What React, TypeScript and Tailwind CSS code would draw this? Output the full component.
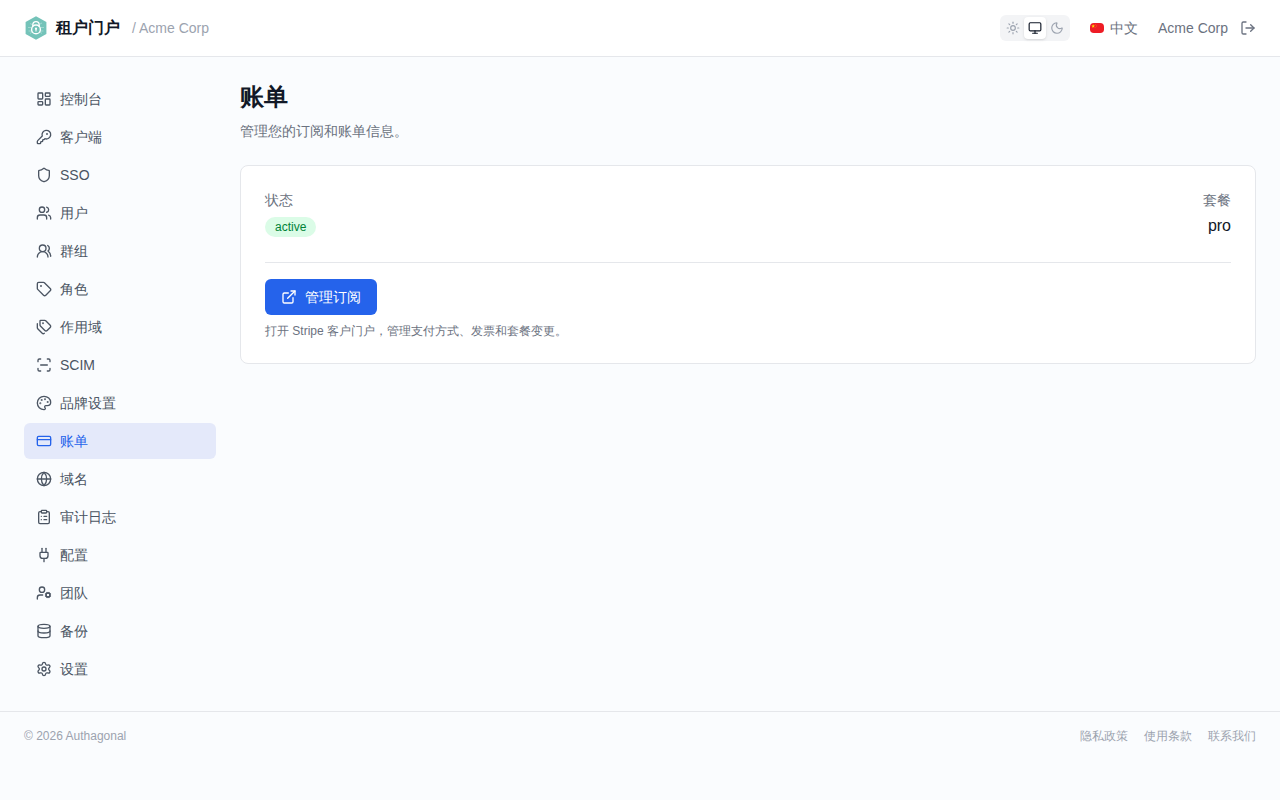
import React from 'react';
import {
  ClipboardList,
  CreditCard,
  Database,
  ExternalLink,
  Globe,
  KeyRound,
  LayoutDashboard,
  LogOut,
  LucideIcon,
  Monitor,
  Moon,
  Palette,
  Plug,
  ScanLine,
  Settings,
  Shield,
  Sun,
  Tag,
  Tags,
  UserCog,
  Users,
  UsersRound,
} from 'lucide-react';

interface NavItem {
  label: string;
  icon: LucideIcon;
  active?: boolean;
}

const navItems: NavItem[] = [
  { label: '控制台', icon: LayoutDashboard },
  { label: '客户端', icon: KeyRound },
  { label: 'SSO', icon: Shield },
  { label: '用户', icon: Users },
  { label: '群组', icon: UsersRound },
  { label: '角色', icon: Tag },
  { label: '作用域', icon: Tags },
  { label: 'SCIM', icon: ScanLine },
  { label: '品牌设置', icon: Palette },
  { label: '账单', icon: CreditCard, active: true },
  { label: '域名', icon: Globe },
  { label: '审计日志', icon: ClipboardList },
  { label: '配置', icon: Plug },
  { label: '团队', icon: UserCog },
  { label: '备份', icon: Database },
  { label: '设置', icon: Settings },
];

const footerLinks = ['隐私政策', '使用条款', '联系我们'];

const Logo: React.FC = () => (
  <svg viewBox="0 0 24 24" className="h-6 w-6" fill="none">
    <path d="M12 0.2 22.4 6v12L12 23.8 1.6 18V6z" fill="#74c3b9" />
    <g stroke="#b5e0da" strokeWidth="0.7">
      <path d="M4 11.5h3M4.5 15h2.5M6 17.5l2-1.5M17 11.5h3M17 15h2.5M16 16l2 1.5M6 7.5l2 1M18 7l-2 1" />
    </g>
    <path d="M8.8 11V8.9a3.2 3.2 0 0 1 6.4 0V11" stroke="#fff" strokeWidth="1.3" />
    <circle cx="12" cy="13.4" r="4.4" stroke="#fff" strokeWidth="1.4" />
    <circle cx="12" cy="12.7" r="1.1" fill="#fff" />
    <path d="M12 12.8v2.6" stroke="#fff" strokeWidth="1.1" />
  </svg>
);

const ChinaFlag: React.FC = () => (
  <svg viewBox="0 0 14 10" className="h-2.5 w-3.5">
    <rect width="14" height="10" rx="3.8" fill="#ee1c25" />
    <path d="m3.2 1.2.5 1.2 1.3.1-1 .85.3 1.3-1.1-.7-1.1.7.3-1.3-1-.85 1.3-.1z" fill="#ffde00" />
    <g fill="#ff9b00">
      <circle cx="5.4" cy="1.3" r="0.35" />
      <circle cx="6.3" cy="2.3" r="0.35" />
      <circle cx="6.2" cy="3.6" r="0.35" />
      <circle cx="5.3" cy="4.5" r="0.35" />
    </g>
  </svg>
);

const ThemeSwitch: React.FC = () => (
  <div className="flex items-center rounded-md bg-[#f3f4f6] p-0.5">
    <button className="rounded p-1 text-[#9ca3af]">
      <Sun size={14} />
    </button>
    <button className="rounded bg-white p-1 text-[#111827] shadow-sm">
      <Monitor size={14} />
    </button>
    <button className="rounded p-1 text-[#9ca3af]">
      <Moon size={14} />
    </button>
  </div>
);

const Header: React.FC = () => (
  <header className="flex h-[57px] items-center justify-between border-b border-[#e5e7eb] bg-white px-6">
    <div className="flex items-center">
      <Logo />
      <span className="ml-2 text-base font-bold text-[#111827]">租户门户</span>
      <span className="ml-3 text-sm text-[#9ca3af]">/ Acme Corp</span>
    </div>
    <div className="flex items-center">
      <ThemeSwitch />
      <button className="ml-5 flex items-center gap-1.5 text-sm text-[#6b7280]">
        <ChinaFlag />
        中文
      </button>
      <span className="ml-5 text-sm text-[#6b7280]">Acme Corp</span>
      <button className="ml-3 text-[#6b7280]">
        <LogOut size={16} />
      </button>
    </div>
  </header>
);

const Sidebar: React.FC = () => (
  <nav className="flex w-48 shrink-0 flex-col gap-0.5">
    {navItems.map(({ label, icon: Icon, active }) => (
      <a
        key={label}
        className={`flex h-9 items-center gap-2 rounded-md px-3 text-sm ${
          active ? 'bg-[#e4e9fa] text-[#2563eb]' : 'text-[#4b5563]'
        }`}
      >
        <Icon size={16} />
        {label}
      </a>
    ))}
  </nav>
);

const BillingCard: React.FC = () => (
  <div className="mt-6 rounded-lg border border-[#e5e7eb] bg-white p-6">
    <div className="flex items-start justify-between">
      <div>
        <p className="text-sm text-[#6b7280]">状态</p>
        <span className="mt-[7px] flex h-5 items-center rounded-full bg-green-100 px-2.5 text-xs text-green-700">
          active
        </span>
      </div>
      <div className="text-right">
        <p className="text-sm text-[#6b7280]">套餐</p>
        <p className="mt-1 text-base text-[#111827]">pro</p>
      </div>
    </div>
    <div className="mt-6 border-t border-[#e5e7eb] pt-4">
      <button className="flex h-9 items-center gap-2 rounded-md bg-[#2563eb] px-4 text-sm text-white">
        <ExternalLink size={16} />
        管理订阅
      </button>
      <p className="mt-2 text-xs text-[#6b7280]">打开 Stripe 客户门户，管理支付方式、发票和套餐变更。</p>
    </div>
  </div>
);

const App: React.FC = () => {
  return (
    <div lang="zh" className="min-h-screen bg-[#fafcfe] font-['Liberation_Sans',sans-serif] text-[#111827]">
      <Header />
      <div className="flex gap-6 p-6">
        <Sidebar />
        <main className="flex-1">
          <h1 className="text-2xl font-bold">账单</h1>
          <p className="mt-2 text-sm text-[#6b7280]">管理您的订阅和账单信息。</p>
          <BillingCard />
        </main>
      </div>
      <footer className="flex items-center justify-between border-t border-[#e5e7eb] px-6 py-4 text-xs text-[#9ca3af]">
        <span>© 2026 Authagonal</span>
        <div className="flex gap-4">
          {footerLinks.map((link) => (
            <a key={link}>{link}</a>
          ))}
        </div>
      </footer>
    </div>
  );
};

export default App;
